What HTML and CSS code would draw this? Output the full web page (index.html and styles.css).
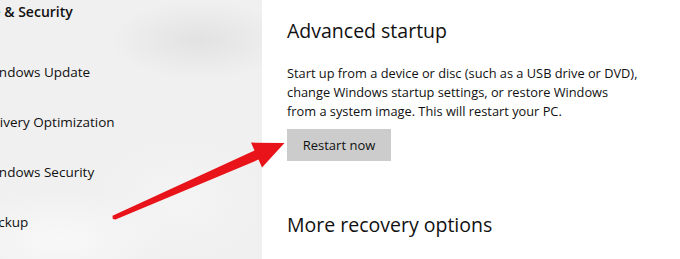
FILE: index.html
```html
<!DOCTYPE html>
<html lang="en">
<head>
  <meta charset="UTF-8" />
  <title>Recovery - Settings</title>
  <link rel="stylesheet" href="styles.css">
</head>
<body>

<div class="window">
  <nav class="sidebar">
    <div class="sidebar-title">Update &amp; Security</div>
    <ul class="nav-list">
      <li class="nav-item nav-windows">Windows Update</li>
      <li class="nav-item nav-delivery">Delivery Optimization</li>
      <li class="nav-item nav-windows">Windows Security</li>
      <li class="nav-item nav-backup">Backup</li>
    </ul>
  </nav>

  <main class="content">
    <h2>Advanced startup</h2>
    <p>Start up from a device or disc (such as a USB drive or DVD), change Windows startup settings, or restore Windows<br>from a system image. This will restart your PC.</p>
    <button type="button">Restart now</button>
    <h2 class="more">More recovery options</h2>
  </main>

  <!-- red pointer drawn over the screenshot -->
  <svg class="arrow" width="680" height="259" viewBox="0 0 680 259">
    <polygon fill="#e8141a" points="112.5,215.8 254.5,150.4 251,142.6 284.5,143 262,167.4 258.5,159.6 115.5,219.5 112.8,219" />
  </svg>
</div>

</body>
</html>
```

FILE: styles.css
```css
body {
  margin: 0;
  font-family: "Open Sans", "Noto Sans", sans-serif;
  color: #000;
  background: #fff;
}
.window {
  position: relative;
  display: flex;
  width: 680px;
  height: 259px;
  overflow: hidden;
}
.sidebar {
  width: 262px;
  flex-shrink: 0;
  overflow: hidden;
  background-color: #f0f0f0;
  background-image:
    radial-gradient(ellipse 90px 40px at 200px 40px, rgba(212,212,212,0.5), transparent),
    radial-gradient(ellipse 110px 50px at 60px 240px, rgba(250,250,250,0.8), transparent),
    radial-gradient(ellipse 80px 60px at 180px 200px, rgba(246,246,246,0.7), transparent);
}
.sidebar-title {
  font-size: 14px;
  font-weight: 600;
  line-height: 24px;
  color: #111;
  margin-left: -49px;
  white-space: nowrap;
}
.nav-list {
  list-style: none;
  margin: 38px 0 0;
  padding: 0;
}
.nav-item {
  font-size: 13.5px;
  line-height: 20px;
  height: 50px;
  color: #111;
  white-space: nowrap;
}
.nav-windows { margin-left: -17px; }
.nav-delivery { margin-left: -21px; }
.nav-backup { margin-left: -18px; }
.content {
  padding-left: 25px;
  padding-top: 17px;
}
h2 {
  font-size: 19.5px;
  font-weight: 400;
  line-height: 28px;
  margin: 0;
  color: #111;
}
p {
  font-size: 12.8px;
  line-height: 19px;
  margin: 19px 0 8px;
  width: 382px;
  color: #111;
}
button {
  font-family: inherit;
  font-size: 13px;
  color: #111;
  background: #cccccc;
  border: none;
  height: 32px;
  width: 104px;
  padding: 0;
}
.more {
  margin-top: 50px;
}
.arrow {
  position: absolute;
  left: 0;
  top: 0;
}
```
